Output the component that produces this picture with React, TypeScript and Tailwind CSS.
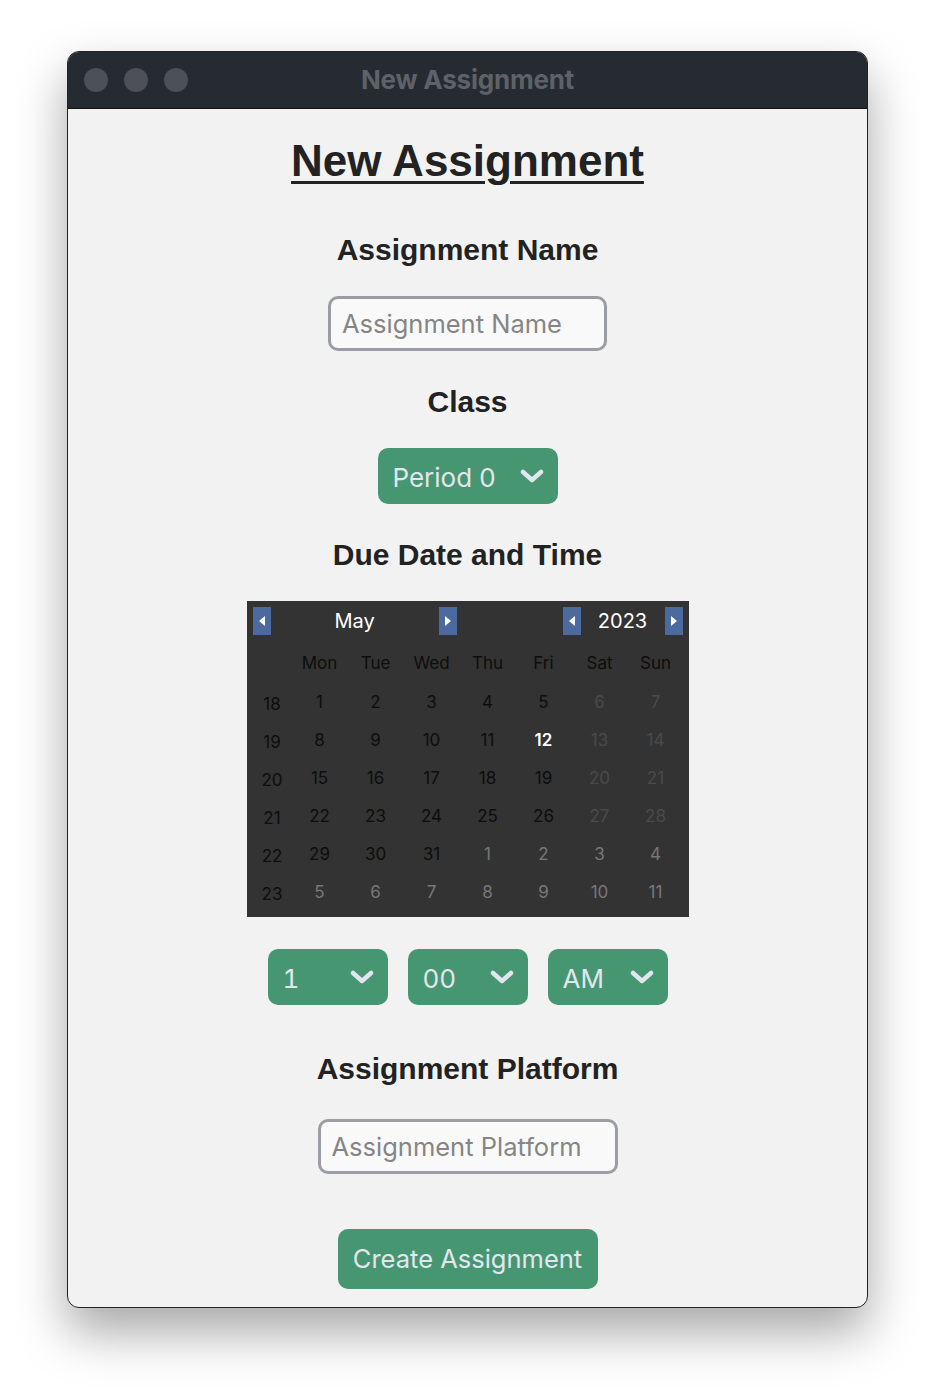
import React from "react";

const Chevron = () => (
  <svg width="24" height="14" viewBox="0 0 24 14" className="shrink-0">
    <polyline points="3,3 12,11 21,3" fill="none" stroke="#e2e6ef" strokeWidth="4.5" strokeLinecap="round" strokeLinejoin="round" />
  </svg>
);

const Select = ({ label, width }: { label: string; width: string }) => (
  <div className={`${width} h-[56px] bg-[#479672] rounded-[10px] flex items-center justify-between pl-[15px] pr-[14px]`}>
    <span className="text-[26px] text-[#e2e6ef] leading-none pt-[3px] tabular-nums" style={{ fontFamily: "Inter, 'Noto Sans', sans-serif" }}>{label}</span>
    <Chevron />
  </div>
);

const ArrowBtn = ({ dir }: { dir: "l" | "r" }) => (
  <div className="w-[18px] h-[28px] bg-[#4c6a9e] flex items-center justify-center">
    <svg width="8" height="12" viewBox="0 0 8 12">
      {dir === "l" ? <polygon points="7,1 1,6 7,11" fill="#fff" /> : <polygon points="1,1 7,6 1,11" fill="#fff" />}
    </svg>
  </div>
);

type Cell = { d: number; kind: "cur" | "wkend" | "other" | "today" };

const weeks: { wk: number; days: Cell[] }[] = (() => {
  const res: { wk: number; days: Cell[] }[] = [];
  const flat: Cell[] = [];
  for (let d = 1; d <= 31; d++) {
    const idx = d - 1;
    const dow = idx % 7;
    flat.push({ d, kind: d === 12 ? "today" : dow >= 5 ? "wkend" : "cur" });
  }
  for (let d = 1; d <= 11; d++) flat.push({ d, kind: "other" });
  for (let w = 0; w < 6; w++) res.push({ wk: 18 + w, days: flat.slice(w * 7, w * 7 + 7) });
  return res;
})();

const cellColor = (k: Cell["kind"]) =>
  k === "cur" ? "text-[#0d0d0d]" : k === "wkend" ? "text-[#4a4a4a]" : k === "other" ? "text-[#787878]" : "text-white font-semibold";

const Calendar = () => (
  <div className="w-[442px] h-[316px] bg-[#333333] pt-[6px] pl-[6px] pr-[5px]" style={{ fontFamily: "Inter, 'Noto Sans', sans-serif" }}>
    <div className="flex items-center h-[28px]">
      <ArrowBtn dir="l" />
      <div className="w-[168px] text-center text-white text-[20px]">May</div>
      <ArrowBtn dir="r" />
      <div className="w-[106px]" />
      <ArrowBtn dir="l" />
      <div className="w-[84px] text-center text-white text-[20px]">2023</div>
      <ArrowBtn dir="r" />
    </div>
    <div className="mt-[10px] grid grid-cols-[39px_repeat(7,56px)]">
      <div className="h-[38px]" />
      {["Mon", "Tue", "Wed", "Thu", "Fri", "Sat", "Sun"].map((n) => (
        <div key={n} className="h-[38px] flex items-center justify-center text-[17px] text-[#0d0d0d]">{n}</div>
      ))}
      {weeks.map((w) => (
        <React.Fragment key={w.wk}>
          <div className="h-[38px] flex items-center justify-center pt-[5px] text-[17px] text-[#0d0d0d]">{w.wk}</div>
          {w.days.map((c, i) => (
            <div key={i} className={`h-[38px] flex items-center justify-center pt-[1px] text-[17px] ${cellColor(c.kind)}`}>{c.d}</div>
          ))}
        </React.Fragment>
      ))}
    </div>
  </div>
);

const Label = ({ children, mt }: { children: React.ReactNode; mt: string }) => (
  <div className={`${mt} h-[36px] leading-[36px] text-[30px] font-bold text-[#222222]`} style={{ fontFamily: "'Liberation Sans', Arial, sans-serif" }}>
    {children}
  </div>
);

const Input = ({ placeholder, width }: { placeholder: string; width: string }) => (
  <input
    placeholder={placeholder}
    className={`${width} h-[55px] border-[3px] border-[#9a9ea4] rounded-[10px] bg-[#f9f9f9] pl-[11px] text-[25.5px] placeholder:text-[#858585] outline-none`}
    style={{ fontFamily: "Inter, 'Noto Sans', sans-serif" }}
  />
);

export default function App() {
  return (
    <div className="w-[936px] h-[1392px] bg-white pt-[51px] pl-[67px]">
      <div className="w-[801px] h-[1257px] rounded-[12px] border border-[#222] overflow-hidden bg-[#f2f2f2] shadow-[0_24px_50px_rgba(0,0,0,0.35)] flex flex-col">
        <div className="h-[57px] bg-[#262a31] border-b border-[#111] flex items-center relative shrink-0">
          <div className="flex gap-[16px] pl-[16px]">
            <div className="w-[24px] h-[24px] rounded-full bg-[#4d5056]" />
            <div className="w-[24px] h-[24px] rounded-full bg-[#4d5056]" />
            <div className="w-[24px] h-[24px] rounded-full bg-[#4d5056]" />
          </div>
          <div className="absolute inset-0 flex items-center justify-center pb-[2px] text-[26px] font-bold text-[#5e6267] tracking-[-0.2px]" style={{ fontFamily: "Inter, 'Noto Sans', sans-serif" }}>
            New Assignment
          </div>
        </div>
        <div className="flex flex-col items-center">
          <div className="mt-[26px] h-[52px] leading-[52px] text-[44px] font-bold underline decoration-[3px] underline-offset-[5px] text-[#222222]" style={{ fontFamily: "'Liberation Sans', Arial, sans-serif" }}>
            New Assignment
          </div>
          <Label mt="mt-[45px]">Assignment Name</Label>
          <div className="mt-[28px]"><Input placeholder="Assignment Name" width="w-[279px]" /></div>
          <Label mt="mt-[33px]">Class</Label>
          <div className="mt-[28px]"><Select label="Period 0" width="w-[180px]" /></div>
          <Label mt="mt-[33px]">Due Date and Time</Label>
          <div className="mt-[28px]"><Calendar /></div>
          <div className="mt-[32px] flex gap-[20px]">
            <Select label="1" width="w-[120px]" />
            <Select label="00" width="w-[120px]" />
            <Select label="AM" width="w-[120px]" />
          </div>
          <Label mt="mt-[46px]">Assignment Platform</Label>
          <div className="mt-[32px]"><Input placeholder="Assignment Platform" width="w-[300px]" /></div>
          <button className="mt-[55px] w-[260px] h-[60px] bg-[#479672] rounded-[10px] text-[25.5px] text-[#e2e6ef]" style={{ fontFamily: "Inter, 'Noto Sans', sans-serif" }}>
            Create Assignment
          </button>
        </div>
      </div>
    </div>
  );
}
